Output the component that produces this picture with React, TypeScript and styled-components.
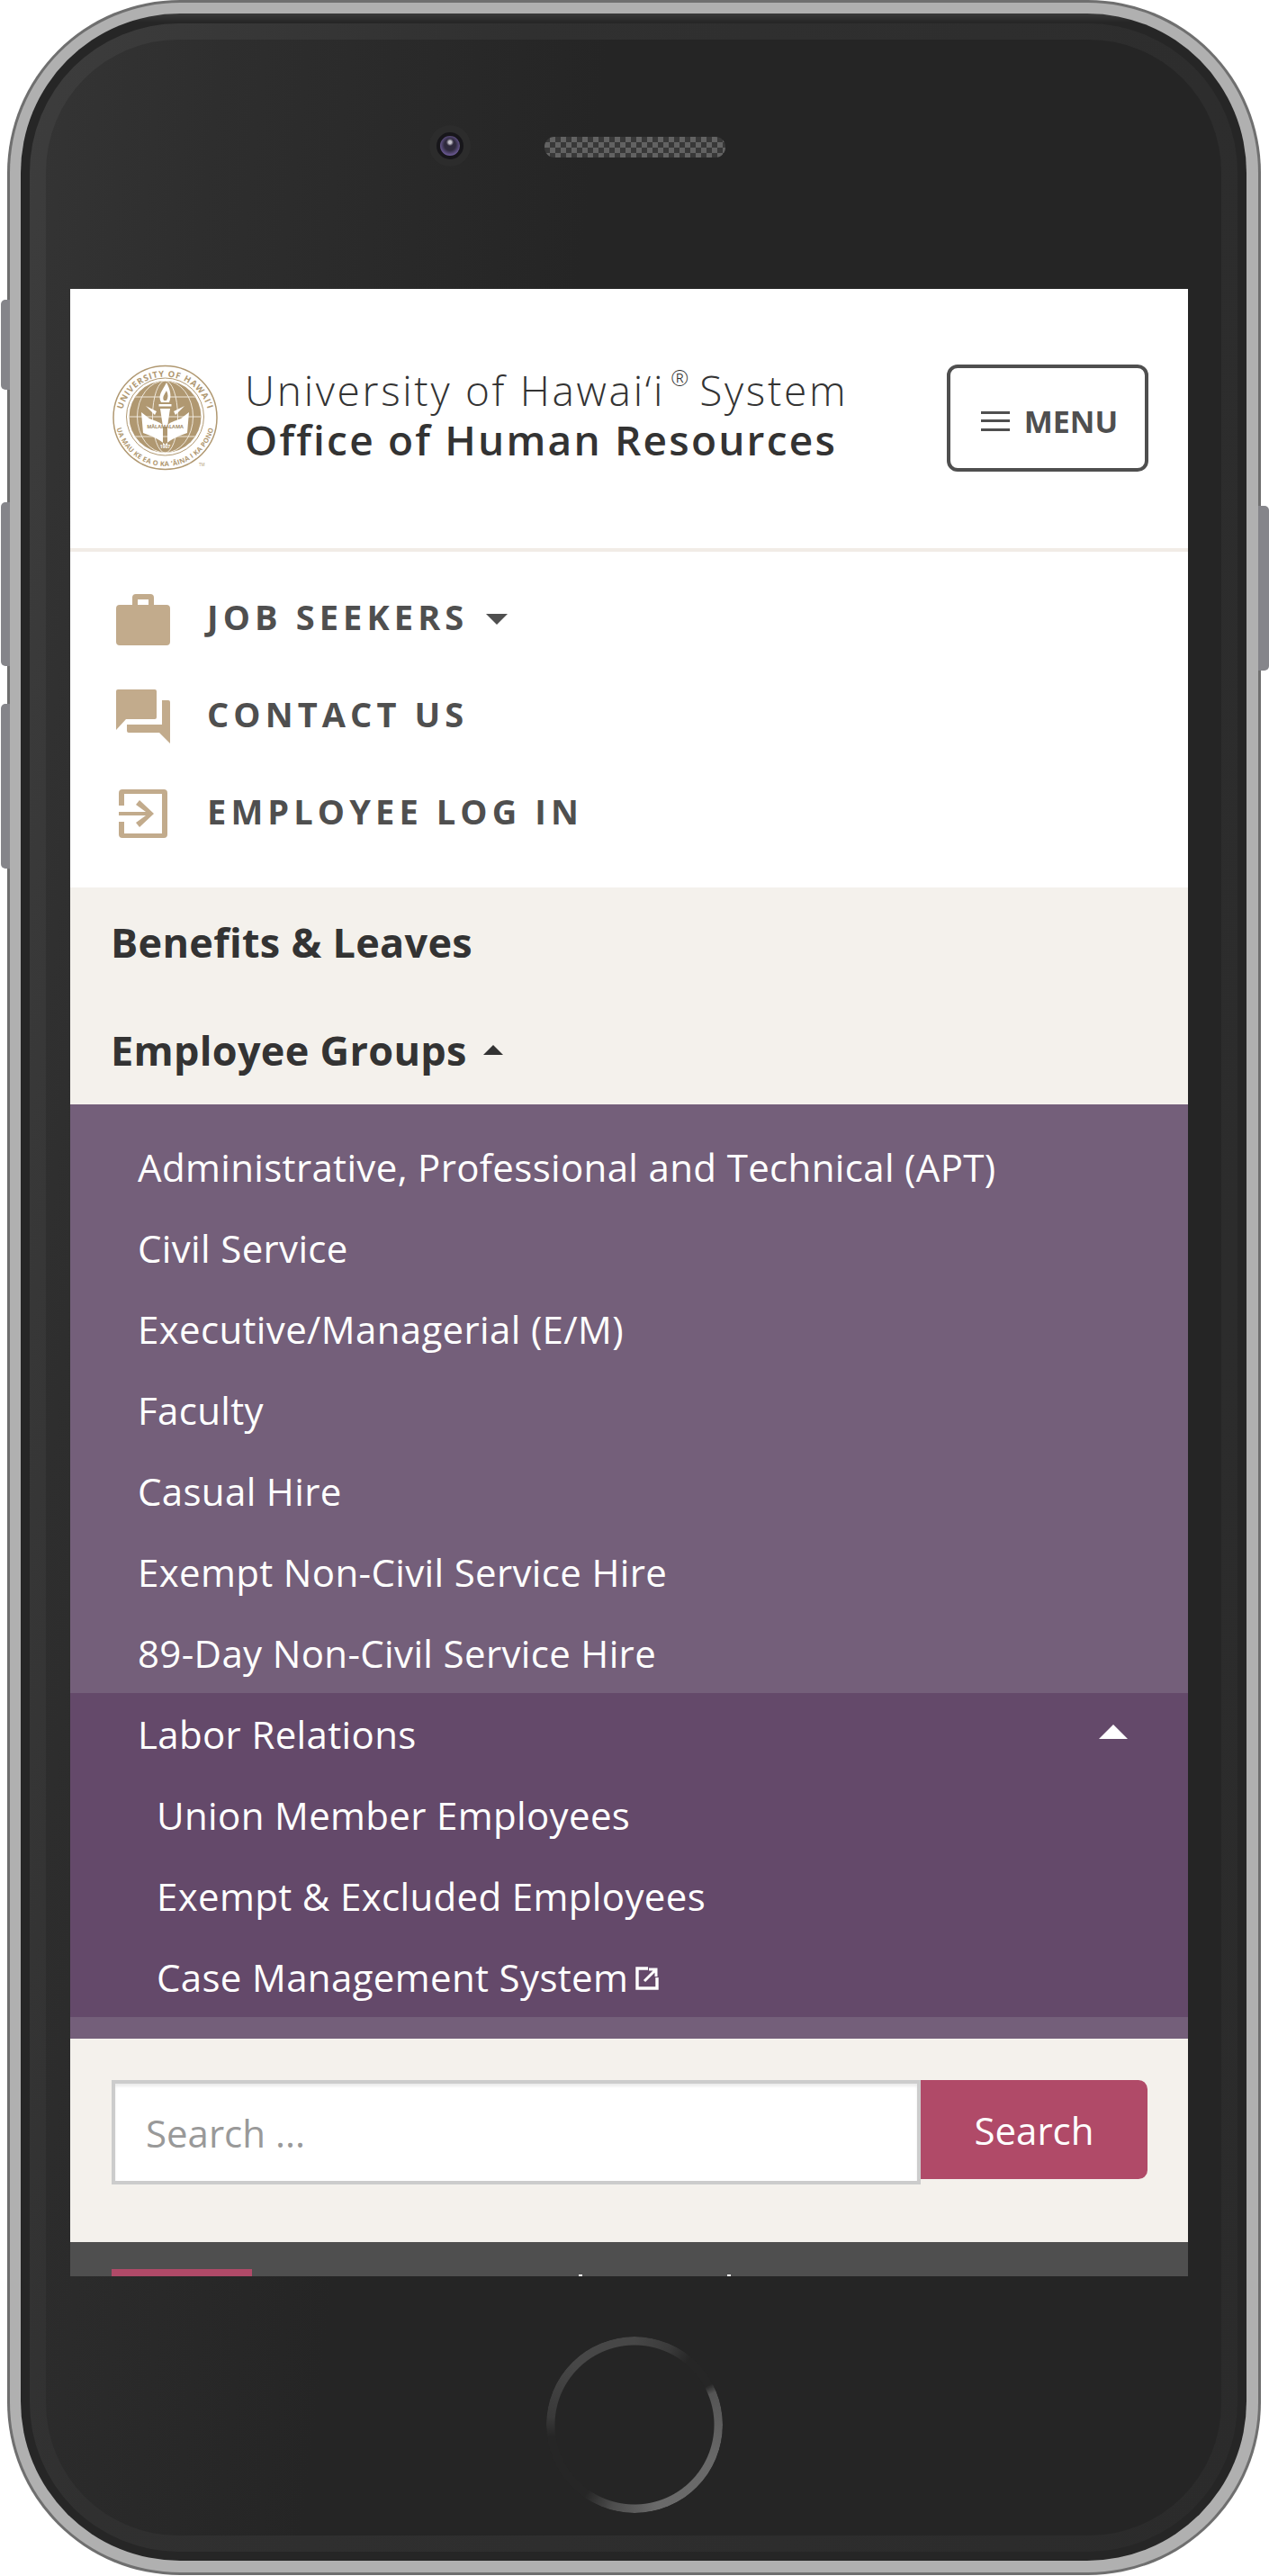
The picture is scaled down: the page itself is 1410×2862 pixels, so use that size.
import React from 'react';
import styled, { createGlobalStyle } from 'styled-components';

const GlobalStyle = createGlobalStyle`
    html, body {
        margin: 0;
        padding: 0;
        background: #fff;
    }
    body {
        font-family: 'Open Sans', 'Liberation Sans', sans-serif;
    }
    * {
        box-sizing: border-box;
    }
`;

const Page = styled.div`
    width: 1410px;
    height: 2862px;
    padding-left: 8px;
    overflow: hidden;
`;

const Phone = styled.div`
    position: relative;
    width: 1393px;
    height: 2861px;
    padding: 3px;
    border-radius: 192px;
    background: #6f6f6f;
`;

const SideKey = styled.div<{ $top: number; $height: number; $right?: boolean }>`
    position: absolute;
    top: ${(p) => p.$top}px;
    height: ${(p) => p.$height}px;
    width: 12px;
    background: #85858a;
    ${(p) => (p.$right ? 'right: -9px; border-radius: 0 5px 5px 0;' : 'left: -7px; border-radius: 5px 0 0 5px;')}
`;

const SilverRim = styled.div`
    position: relative;
    height: 100%;
    padding: 12px 13px 13px 12px;
    border-radius: 189px;
    background: #b0b0b0;
`;

const DarkRim = styled.div`
    height: 100%;
    padding: 11px 10px 10px 10px;
    border-radius: 177px;
    background: linear-gradient(180deg, #3a3a3a 0, #262626 10px);
`;

const InnerRim = styled.div`
    height: 100%;
    padding: 18px;
    border-radius: 166px;
    background: linear-gradient(100deg, #3d3d3d 0, #303030 30%, #2b2b2b 100%);
`;

const Body = styled.div`
    display: flex;
    flex-direction: column;
    height: 100%;
    padding: 0 37px 0 27px;
    border-radius: 147px;
    background: linear-gradient(97deg, #343434 0, #2e2e2e 12%, #252525 38%);
`;

const TopBezel = styled.div`
    display: flex;
    flex: none;
    align-items: center;
    gap: 82px;
    height: 277px;
    padding: 0 0 42px 399px;
`;

const Camera = styled.div`
    display: flex;
    align-items: center;
    justify-content: center;
    width: 46px;
    height: 46px;
    border-radius: 50%;
    background: #2c2c2c;
`;

const CameraLens = styled.div`
    width: 30px;
    height: 30px;
    border-radius: 50%;
    border: 4px solid #17161a;
    background:
        radial-gradient(circle at 50% 32%, #c4c1ca 0, #c4c1ca 8%, transparent 22%),
        radial-gradient(circle at 50% 45%, #2f2a3d 0, #2f2a3d 38%, #7360a0 76%, #4b3e70 100%);
`;

const Speaker = styled.div`
    width: 201px;
    height: 23px;
    margin-top: 3px;
    border-radius: 11px;
    background: repeating-conic-gradient(#626262 0 25%, #383838 0 50%) 0 0 / 12px 12px;
`;

const Screen = styled.div`
    display: flex;
    flex: none;
    flex-direction: column;
    height: 2208px;
    overflow: hidden;
    background: #fff;
`;

const Header = styled.header`
    display: flex;
    flex: none;
    align-items: center;
    height: 292px;
    padding: 0 44px 1px 46px;
    border-bottom: 4px solid #f1ece6;
`;

const Seal = styled.svg`
    flex: none;
    width: 119px;
    height: 119px;
`;

const Brand = styled.div`
    flex: 1;
    margin: 0 0 7px 29px;
    color: #333;
    font-size: 46px;
    line-height: 55px;
`;

const BrandTop = styled.div`
    font-weight: 300;
    letter-spacing: 2.7px;
    white-space: nowrap;

    sup {
        position: relative;
        top: -22px;
        margin: 0 12px 0 6px;
        font-size: 24px;
        letter-spacing: 0;
        line-height: 0;
        vertical-align: baseline;
    }
`;

const BrandBottom = styled.div`
    font-weight: 600;
    letter-spacing: 2.2px;
    white-space: nowrap;
`;

const MenuButton = styled.button`
    display: flex;
    flex: none;
    align-items: center;
    justify-content: center;
    gap: 16px;
    width: 224px;
    height: 119px;
    padding: 6px 0 0 4px;
    border: 4px solid #4f4f4f;
    border-radius: 12px;
    background: #fff;
    color: #4f4f4f;
    font-family: inherit;
    font-size: 34px;
    font-weight: 700;
`;

const Burger = styled.span`
    display: block;
    width: 32px;
    height: 22px;
    border-top: 3px solid #4f4f4f;
    border-bottom: 3px solid #4f4f4f;
    background: linear-gradient(#4f4f4f, #4f4f4f) center / 100% 3px no-repeat;
`;

const Nav = styled.nav`
    flex: none;
    height: 373px;
    padding: 18px 0 0 51px;
`;

const NavRow = styled.a`
    display: flex;
    align-items: center;
    height: 108px;
    color: #4f4f4f;
    font-size: 38px;
    font-weight: 700;
    letter-spacing: 5.1px;
`;

const NavIcon = styled.span`
    display: flex;
    flex: none;
    justify-content: center;
    width: 60px;
    margin: 6px 41px 0 0;

    svg {
        display: block;
        fill: #c2ab8c;
    }
`;

const CaretDown = styled.span`
    width: 0;
    height: 0;
    margin: 6px 0 0 20px;
    border-left: 12px solid transparent;
    border-right: 12px solid transparent;
    border-top: 12px solid #4f4f4f;
`;

const CaretUp = styled.span<{ $size: number; $color: string }>`
    display: inline-block;
    width: 0;
    height: 0;
    border-left: ${(p) => p.$size}px solid transparent;
    border-right: ${(p) => p.$size}px solid transparent;
    border-bottom: ${(p) => p.$size}px solid ${(p) => p.$color};
`;

const MainLinks = styled.div`
    flex: none;
    height: 241px;
    padding-left: 45px;
    background: #f4f1ec;
`;

const MainLink = styled.a`
    display: flex;
    align-items: center;
    gap: 18px;
    height: 120.5px;
    color: #333;
    font-size: 45px;
    font-weight: 700;
    letter-spacing: 0.3px;
`;

const SubMenu = styled.div`
    flex: none;
    height: 1038px;
    padding: 24px 0;
    background: #745f7a;
`;

const SubItem = styled.a`
    display: block;
    height: 90px;
    padding-left: 75px;
    color: #fff;
    font-size: 42px;
    letter-spacing: 0.35px;
    line-height: 92px;
    white-space: nowrap;
`;

const LaborGroup = styled.div`
    background: #64496a;
`;

const LaborRow = styled.div`
    display: flex;
    align-items: center;
    justify-content: space-between;
    height: 90px;
    padding: 0 67px 0 75px;
    color: #fff;
    font-size: 42px;
    letter-spacing: 0.35px;

    span {
        margin-bottom: 4px;
    }
`;

const LaborItem = styled.a`
    display: flex;
    align-items: center;
    gap: 8px;
    height: 90px;
    padding-left: 96px;
    color: #fff;
    font-size: 42px;
    letter-spacing: 0.35px;
    white-space: nowrap;

    svg {
        margin-top: 4px;
    }
`;

const SearchBar = styled.form`
    display: flex;
    flex: none;
    align-items: flex-start;
    height: 226px;
    padding: 46px 45px 0 46px;
    background: #f4f1ec;
`;

const SearchInput = styled.input`
    flex: 1;
    min-width: 0;
    height: 116px;
    padding: 0 34px;
    border: 4px solid #ccc;
    background: #fff;
    box-shadow: inset 0 3px 3px rgba(0, 0, 0, 0.08);
    color: #333;
    font-family: inherit;
    font-size: 42px;
    outline: none;

    &::placeholder {
        color: #999;
        opacity: 1;
    }
`;

const SearchButton = styled.button`
    flex: none;
    width: 252px;
    height: 110px;
    padding: 0;
    border: none;
    border-radius: 0 10px 10px 0;
    background: #b04a68;
    color: #fff;
    font-family: inherit;
    font-size: 42px;
`;

const Footer = styled.div`
    display: flex;
    flex: 1;
    align-items: flex-start;
    padding: 30px 0 0 46px;
    background: #4f4f4f;
`;

const FooterBadge = styled.div`
    flex: none;
    width: 156px;
    height: 30px;
    background: #b04a68;
`;

const FooterSpeck = styled.span<{ $gap: number }>`
    flex: none;
    width: 4px;
    height: 3px;
    margin: 6px 0 0 ${(p) => p.$gap}px;
    background: #fff;
`;

const BottomBezel = styled.div`
    display: flex;
    flex: 1;
    align-items: center;
    justify-content: center;
    padding: 0 0 0 11px;
`;

const HomeRing = styled.div`
    width: 196px;
    height: 196px;
    margin-top: 42px;
    border-radius: 50%;
    background: conic-gradient(
        #474747 0deg,
        #3a3a3a 25deg,
        #262626 40deg,
        #262626 62deg,
        #555 68deg,
        #696969 115deg,
        #6a6a6a 165deg,
        #4d4d4d 195deg,
        #262626 215deg,
        #262626 262deg,
        #393939 275deg,
        #474747 315deg,
        #474747 360deg
    );
    -webkit-mask: radial-gradient(circle, transparent 88px, #000 89px);
    mask: radial-gradient(circle, transparent 88px, #000 89px);
`;

const otherItems = [
    'Administrative, Professional and Technical (APT)',
    'Civil Service',
    'Executive/Managerial (E/M)',
    'Faculty',
    'Casual Hire',
    'Exempt Non-Civil Service Hire',
    '89-Day Non-Civil Service Hire',
];

const UhSeal = () => (
    <Seal viewBox='0 0 238 238'>
        <defs>
            <path id='sealTop' d='M 21 125 A 98 98 0 0 1 217 125' />
            <path id='sealBottom' d='M 9 130 A 111 111 0 0 0 229 130' />
            <clipPath id='sealDisc'>
                <circle cx='119' cy='116' r='80' />
            </clipPath>
        </defs>
        <circle cx='119' cy='118' r='115' fill='none' stroke='#b09871' strokeWidth='3' />
        <circle cx='119' cy='116' r='86' fill='none' stroke='#b09871' strokeWidth='2' />
        <circle cx='119' cy='116' r='80' fill='#b09871' />
        <g clipPath='url(#sealDisc)' fill='none' stroke='#efe8dc' strokeWidth='2'>
            <ellipse cx='119' cy='116' rx='62' ry='80' />
            <ellipse cx='119' cy='116' rx='28' ry='80' />
            <path d='M 36 116 H 202 M 45 72 H 193 M 45 160 H 193' />
        </g>
        <path
            d='M 66 106 L 84 120 C 98 126 110 128 114 136 L 114 178 L 124 178 L 124 136 C 128 128 140 126 154 120 L 172 106 L 168 152 C 150 158 132 166 119 178 C 106 166 88 158 70 152 Z'
            fill='#fff'
        />
        <path d='M 108 98 H 130 L 124 138 H 114 Z' fill='#fff' />
        <path d='M 105 88 H 133 V 93 H 105 Z' fill='#fff' />
        <path d='M 110 84 C 102 68 112 60 122 40 C 130 54 134 70 128 84 Z' fill='#fff' />
        <path d='M 116 80 C 112 72 118 66 122 58 C 126 66 126 74 122 80 Z' fill='#b09871' />
        <path d='M 96 112 L 76 92 L 100 104 Z M 142 112 L 162 92 L 138 104 Z' fill='#fff' />
        <text x='119' y='142' textAnchor='middle' fontSize='11' fontWeight='700' fill='#a08a66' fontFamily='Open Sans'>
            MĀLAMALAMA
        </text>
        <text x='119' y='186' textAnchor='middle' fontSize='10' fontWeight='700' fill='#fff' fontFamily='Open Sans'>
            1907
        </text>
        <text fontSize='19' fontWeight='700' fill='#b09871' fontFamily='Open Sans' letterSpacing='1.6'>
            <textPath href='#sealTop' startOffset='50%' textAnchor='middle'>
                UNIVERSITY OF HAWAI‘I
            </textPath>
        </text>
        <text fontSize='15' fontWeight='700' fill='#b09871' fontFamily='Open Sans' letterSpacing='0.6'>
            <textPath href='#sealBottom' startOffset='50%' textAnchor='middle'>
                UA MAU KE EA O KA ‘ĀINA I KA PONO
            </textPath>
        </text>
        <text x='194' y='226' fontSize='9' fill='#b09871' fontFamily='Open Sans'>
            TM
        </text>
    </Seal>
);

const BriefcaseIcon = () => (
    <svg width='60' height='57' viewBox='0 0 60 57'>
        <path
            fillRule='evenodd'
            d='M22 0 h16 q4 0 4 4 v8 h14 q4 0 4 4 v37 q0 4 -4 4 h-52 q-4 0 -4 -4 v-37 q0 -4 4 -4 h14 v-8 q0 -4 4 -4 z M24 6 v6 h12 v-6 z'
        />
    </svg>
);

const ChatIcon = () => (
    <svg width='60' height='60' viewBox='0 0 60 60'>
        <path d='M2 0 H43 Q45 0 45 2 V31 Q45 33 43 33 H11 L0 45 V2 Q0 0 2 0 Z' />
        <path d='M51 12 H58 Q60 12 60 14 V60 L48 48 H14 Q12 48 12 46 V39 H51 Z' />
    </svg>
);

const LoginIcon = () => (
    <svg width='54' height='54' viewBox='0 0 54 54'>
        <path d='M0 4 Q0 0 4 0 H50 Q54 0 54 4 V50 Q54 54 50 54 H4 Q0 54 0 50 V36 H6 V49 H48 V5 H6 V18 H0 Z M0 25 H30 L19 17 L23 12 L39 27 L23 42 L19 37 L30 29 H0 Z' />
    </svg>
);

const ExternalIcon = () => (
    <svg width='26' height='26' viewBox='0 0 26 26' fill='none' stroke='#fff' strokeWidth='3.4'>
        <path d='M14 2 H2 V24 H24 V12' />
        <path d='M10 16 L22 4 M15 3 H23 V11' strokeWidth='3' />
    </svg>
);

const App = () => {
    return (
        <Page>
            <GlobalStyle />
            <Phone>
                <SideKey $top={333} $height={100} />
                <SideKey $top={558} $height={182} />
                <SideKey $top={782} $height={183} />
                <SideKey $top={562} $height={183} $right />
                <SilverRim>
                    <DarkRim>
                        <InnerRim>
                            <Body>
                                <TopBezel>
                                    <Camera>
                                        <CameraLens />
                                    </Camera>
                                    <Speaker />
                                </TopBezel>
                                <Screen>
                                    <Header>
                                        <UhSeal />
                                        <Brand>
                                            <BrandTop>
                                                University of Hawai‘i<sup>®</sup>System
                                            </BrandTop>
                                            <BrandBottom>Office of Human Resources</BrandBottom>
                                        </Brand>
                                        <MenuButton type='button'>
                                            <Burger />
                                            MENU
                                        </MenuButton>
                                    </Header>
                                    <Nav>
                                        <NavRow>
                                            <NavIcon>
                                                <BriefcaseIcon />
                                            </NavIcon>
                                            JOB SEEKERS
                                            <CaretDown />
                                        </NavRow>
                                        <NavRow>
                                            <NavIcon>
                                                <ChatIcon />
                                            </NavIcon>
                                            CONTACT US
                                        </NavRow>
                                        <NavRow>
                                            <NavIcon>
                                                <LoginIcon />
                                            </NavIcon>
                                            EMPLOYEE LOG IN
                                        </NavRow>
                                    </Nav>
                                    <MainLinks>
                                        <MainLink>Benefits &amp; Leaves</MainLink>
                                        <MainLink>
                                            Employee Groups
                                            <CaretUp $size={11} $color='#333' />
                                        </MainLink>
                                    </MainLinks>
                                    <SubMenu>
                                        {otherItems.map((item) => (
                                            <SubItem key={item}>{item}</SubItem>
                                        ))}
                                        <LaborGroup>
                                            <LaborRow>
                                                Labor Relations
                                                <CaretUp $size={16} $color='#fff' />
                                            </LaborRow>
                                            <LaborItem>Union Member Employees</LaborItem>
                                            <LaborItem>Exempt &amp; Excluded Employees</LaborItem>
                                            <LaborItem>
                                                Case Management System
                                                <ExternalIcon />
                                            </LaborItem>
                                        </LaborGroup>
                                    </SubMenu>
                                    <SearchBar>
                                        <SearchInput placeholder='Search ...' readOnly />
                                        <SearchButton type='button'>Search</SearchButton>
                                    </SearchBar>
                                    <Footer>
                                        <FooterBadge />
                                        <FooterSpeck $gap={363} />
                                        <FooterSpeck $gap={161} />
                                    </Footer>
                                </Screen>
                                <BottomBezel>
                                    <HomeRing />
                                </BottomBezel>
                            </Body>
                        </InnerRim>
                    </DarkRim>
                </SilverRim>
            </Phone>
        </Page>
    );
};

export default App;
